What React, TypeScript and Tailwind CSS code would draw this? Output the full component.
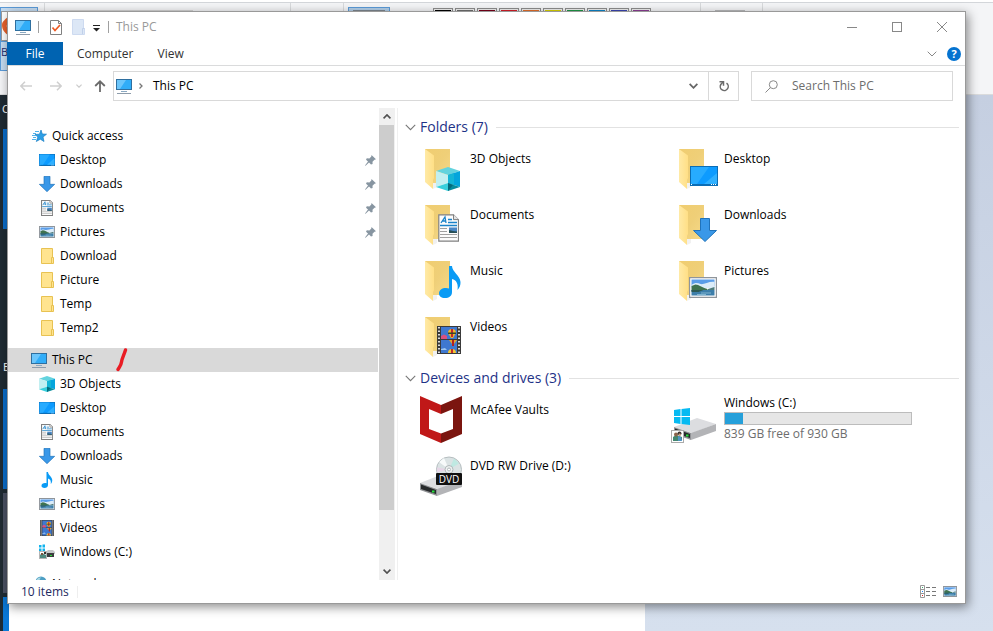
import { useState } from 'react'
import type { ReactNode, SVGProps } from 'react'

type Glyph = (props: SVGProps<SVGSVGElement>) => ReactNode

// ---- small glyphs, shared by the tree and the folder tiles ---------

function DesktopGlyph(props: SVGProps<SVGSVGElement>) {
  return (
    <svg viewBox="0 0 28 20" preserveAspectRatio="none" aria-hidden="true" {...props}>
      <rect width="28" height="20" fill="#0b6db5" />
      <rect x="1" y="1" width="26" height="17" fill="#0d9bff" />
      <path d="M1 1h18L7 18H1z" fill="#27abff" />
      <path d="M27 7v11H14z" fill="#2fb0ff" />
      <path d="M1 18.500h2M21 18.500h6" stroke="#fff" strokeDasharray="1 1" />
    </svg>
  )
}

function DownloadGlyph(props: SVGProps<SVGSVGElement>) {
  return (
    <svg viewBox="0 0 24 24" aria-hidden="true" {...props}>
      <path d="M7.500.5h9v12h7L12 23.500.5 12.500h7z" fill="#3a98e8" stroke="#2073ba" />
    </svg>
  )
}

function DocumentGlyph(props: SVGProps<SVGSVGElement>) {
  return (
    <svg viewBox="0 0 21 28" preserveAspectRatio="none" aria-hidden="true" {...props}>
      <path
        d="M.8.800h14.700l5 5v21.400H.8z"
        fill="#fcfcfc"
        stroke="#808080"
        strokeWidth="1.200"
        vectorEffect="non-scaling-stroke"
      />
      <path d="M15.500.6v5h5" fill="#e4e4e4" stroke="#808080" />
      <path d="M3 9l4-6 1 6M4.500 7h3.500M10 5.500h4M10 8.500h9M2 11.500h17" fill="none" stroke="#1b83c9" strokeWidth="1.300" />
      <path d="M2 14.500h7M2 17.500h7M2 20.500h17M2 23.500h17" stroke="#a0a0a0" />
      <rect x="11" y="13.500" width="8" height="5.500" fill="#4a86c4" />
      <path d="M11 19v-3l4 1 4 .5V19z" fill="#274f56" />
    </svg>
  )
}

function PictureGlyph(props: SVGProps<SVGSVGElement>) {
  return (
    <svg viewBox="0 0 28 21" preserveAspectRatio="none" aria-hidden="true" {...props}>
      <rect width="28" height="21" fill="#fff" />
      <rect x="2.500" y="2.500" width="23" height="7" fill="#5a9de8" />
      <path d="M2.500 8c4-3 6-2 9-1s9-3 14-2v6h-23z" fill="#dcecf8" />
      <path d="M2.500 9l4-1.500c3 0 8 3.500 12 4.500v2h-16z" fill="#3f7350" />
      <path d="M19 12l6.500-2v3H19z" fill="#4f7c7c" />
      <rect x="2.500" y="13" width="23" height="5.500" fill="#3c7eaa" />
      <path d="M2.500 13h12l-5 2h-7z" fill="#2c5952" />
      <path d="M12 16h10M8 17.500h9" stroke="#8fc0d8" strokeWidth=".8" />
      <rect
        x=".6"
        y=".6"
        width="26.800"
        height="19.800"
        fill="none"
        stroke="#8f959b"
        strokeWidth="1.200"
        vectorEffect="non-scaling-stroke"
      />
    </svg>
  )
}

function CubeGlyph(props: SVGProps<SVGSVGElement>) {
  return (
    <svg viewBox="0 0 24 24" aria-hidden="true" {...props}>
      <path d="M0 4l12-4 12 4-12 4z" fill="#63d3de" />
      <path d="M0 4l12 4v8L0 20z" fill="#c2eff1" />
      <path d="M24 4L12 8v8l12 4z" fill="#04a5dc" />
      <path d="M12 8l6-2v12l-6-2z" fill="#14b5d6" />
      <path d="M0 20l12-4v8z" fill="#38cfdc" />
      <path d="M24 20l-12-4v8z" fill="#078c9d" />
      <path d="M12 16l5 2-5 6z" fill="#046a7c" />
    </svg>
  )
}

function MusicGlyph(props: SVGProps<SVGSVGElement>) {
  return (
    <svg viewBox="0 0 22 32" aria-hidden="true" {...props}>
      <path
        d="M10 0h3c0 6 8 9 8.500 16 .2 3-1 6-3 8 1-6-1-10-5.500-11v13c0 4-3 6-7 6s-6-2-6-4.500C0 24 3 22 7 22c1.200 0 2.200.2 3 .6z"
        fill="#0a9bf5"
      />
    </svg>
  )
}

function VideoGlyph(props: SVGProps<SVGSVGElement>) {
  return (
    <svg viewBox="0 0 24 28" preserveAspectRatio="none" aria-hidden="true" {...props}>
      <rect width="24" height="28" fill="#3a3a3a" />
      <path d="M2 1v27M22 1v27" stroke="#dcdcdc" strokeWidth="2" strokeDasharray="1.500 2" />
      <rect x="4" y="1" width="16" height="12" fill="#3f78cf" />
      <rect x="4" y="14" width="16" height="13" fill="#3f78cf" />
      <path d="M4 10l3-1.500 3 1.500v3H4z" fill="#d9507f" />
      <path d="M11 7a4 4 0 018 0l-3 5h-2z" fill="#f0b429" />
      <path d="M14 3h2v8h-2z" fill="#c62a2a" />
      <path d="M11 6.500h8v1.500h-8z" fill="#35472c" />
      <path d="M12 14h8l-3 4h-2z" fill="#e0a32f" />
      <path d="M15 14h2v6h-2z" fill="#b32020" />
      <path d="M4 23l4-1 2 2H4z" fill="#9dc7f2" />
      <path d="M11 27a4 4 0 018 0z" fill="#f2c531" />
      <path d="M14 23h2v4h-2z" fill="#c62a2a" />
    </svg>
  )
}

function FolderGlyph(props: SVGProps<SVGSVGElement>) {
  return (
    <svg viewBox="0 0 16 16" aria-hidden="true" {...props}>
      <path d="M2.500.5h11v9h1v6h-12z" fill="#ffe48f" stroke="#e8c252" />
      <path d="M12.500 15v-5.500h1.500" fill="none" stroke="#e8c252" />
    </svg>
  )
}

function PcGlyph(props: SVGProps<SVGSVGElement>) {
  return (
    <svg viewBox="0 0 16 16" aria-hidden="true" {...props}>
      <rect x=".5" y="1.500" width="15" height="10" fill="#31adf8" stroke="#2f6f9f" />
      <path d="M1 2h9L4 11H1z" fill="#6cc6fb" />
      <path d="M5 13.500h6" stroke="#8aa9c2" />
      <path d="M1 15.500h14" stroke="#8d9cab" />
    </svg>
  )
}

function StarGlyph(props: SVGProps<SVGSVGElement>) {
  return (
    <svg viewBox="0 0 16 16" aria-hidden="true" {...props}>
      <path d="M10 2l1.300 4 4.200.2-3.500 2.800 1 4.500-3.700-2.300-4 2.300 1.600-4.500L4 6.500l4.500-.3z" fill="#2c9fe6" stroke="#1b7fc4" strokeWidth=".7" />
      <path d="M4 3.500h4M2 5.500h3M1 7.500h4M2 9.500h3M1 11.500h4" stroke="#51b2ea" />
    </svg>
  )
}

function DriveGlyph(props: SVGProps<SVGSVGElement>) {
  return (
    <svg viewBox="0 0 16 16" aria-hidden="true" {...props}>
      <path d="M0 1h2.500v2.500H0zM3.500.5H6v3H3.500zM0 4.500h2.500V7H0zM3.500 4.500H6v3H3.500z" fill="#12b4ee" />
      <path d="M7 8l2-2h5l2 2v2H7z" fill="#c4c6c8" />
      <rect x="8" y="9" width="7" height="4" fill="#3b3d3f" />
      <rect x="11" y="11" width="2" height="1" fill="#2dde3b" />
      <rect x=".5" y="7.500" width="7" height="7" fill="#fff" stroke="#b4b4b4" />
      <path d="M1 14v-3l2-2 4 2v3z" fill="#4f8a80" />
      <path d="M2 9h2v2H2z" fill="#7a553f" />
      <path d="M5 8h2v2H5z" fill="#3c332f" />
    </svg>
  )
}

function NetworkGlyph(props: SVGProps<SVGSVGElement>) {
  return (
    <svg viewBox="0 0 16 16" aria-hidden="true" {...props}>
      <circle cx="10" cy="6" r="5.500" fill="#4d9fc4" />
      <path d="M6 3c2-2 3-1 4-2l-2 4-3 2z" fill="#a9d7e2" />
      <rect x="1" y="7" width="9" height="6" fill="#3aaef5" stroke="#2f6f9f" />
    </svg>
  )
}

function PinGlyph(props: SVGProps<SVGSVGElement>) {
  return (
    <svg viewBox="0 0 11 11" aria-hidden="true" {...props}>
      <path d="M6.500 0L11 4.300l-1.500.4-2 2 .1 2.300L6 9.500 4 7.400.6 10.800 0 10.500 3 6.500 1 4.700l.8-1.500 2.600.3 1.900-2z" fill="#8795a1" />
    </svg>
  )
}

function Chevron({ className }: { className?: string }) {
  return (
    <svg viewBox="0 0 10 6" className={className} fill="none" stroke="currentColor" aria-hidden="true">
      <path d="M.7.700L5 5 9.300.700" />
    </svg>
  )
}

// ---- 48px tile icons ------------------------------------------------

function FolderTile({ children }: { children: ReactNode }) {
  return (
    <svg viewBox="0 0 48 48" className="size-12 shrink-0" aria-hidden="true">
      <defs>
        <linearGradient id="folder-back" x1="0" x2="1" y1="0" y2="1">
          <stop offset="0" stopColor="#f0cd70" />
          <stop offset="0.500" stopColor="#efcf78" />
          <stop offset="1" stopColor="#f6da8a" />
        </linearGradient>
        <linearGradient id="folder-flap" x1="0" x2="1">
          <stop offset="0" stopColor="#ffeaa6" />
          <stop offset="1" stopColor="#ffdf86" />
        </linearGradient>
      </defs>
      <path d="M16 45l4-2v-4h-4z" fill="#f1f1f1" />
      <path d="M8 5h25v34H15L8 36z" fill="url(#folder-back)" />
      <path d="M8 5l9 6.500V34l-1 2v9l-8-7z" fill="url(#folder-flap)" />
      {children}
    </svg>
  )
}

function McAfeeTile() {
  return (
    <svg viewBox="0 0 48 48" className="size-12 shrink-0" aria-hidden="true">
      <path d="M3 1l21 9v9l-12-5v20l12 4.500V48L3 39z" fill="#c01818" />
      <path d="M45 1l-21 9v9l12-5v20l-12 4.500V48l21-9z" fill="#7b150f" />
    </svg>
  )
}

function DriveBody() {
  return (
    <>
      <path d="M3 32l23-9 19 6-24 9z" fill="#dcdde0" />
      <path d="M20 38l25-9v7l-25 9z" fill="#b3b4b7" />
      <path d="M3 32l17 6v7L3 39z" fill="#909295" />
      <path d="M4 33.500l15 5.500v4L4 38z" fill="#26292b" />
      <rect x="15" y="39.500" width="2.500" height="2" fill="#27e03c" />
    </>
  )
}

function DvdTile() {
  return (
    <svg viewBox="0 0 48 48" className="size-12 shrink-0" aria-hidden="true">
      <DriveBody />
      <circle cx="32" cy="18.500" r="12.500" fill="#dbe3e4" stroke="#b5bdbf" />
      <path d="M32 18.500L22 11l5-4z" fill="#f7fafa" />
      <path d="M32 18.500l5-11 5 5z" fill="#bfe9e2" />
      <path d="M32 18.500l-12-2v5z" fill="#e6d5e6" />
      <circle cx="32" cy="18.500" r="4" fill="#eef1f1" stroke="#b0b8ba" />
      <circle cx="32" cy="18.500" r="1.500" fill="#fff" stroke="#b0b8ba" />
      <rect x="19" y="22" width="26" height="12" rx="1" fill="#111" />
      <text x="32" y="31.500" fill="#fff" fontSize="10" textAnchor="middle">
        DVD
      </text>
    </svg>
  )
}

function WindowsDriveTile() {
  return (
    <svg viewBox="0 0 48 48" className="size-12 shrink-0" aria-hidden="true">
      <DriveBody />
      <path d="M3 15l6.500-1v7H3zM10.500 14l8.500-1v8h-8.500zM3 22h6.500v7L3 28zM10.500 22H19v8l-8.500-1z" fill="#06baf2" />
      <rect x=".5" y="35.500" width="12" height="12" fill="#fff" stroke="#ababab" />
      <path d="M2 46v-4l3-2 3 1 3 1v3l-3 1z" fill="#42866f" />
      <path d="M7 41l3 1 1 4H7z" fill="#4e93c5" />
      <circle cx="5" cy="39.500" r="2" fill="#8b634a" />
      <circle cx="8.500" cy="38.500" r="2" fill="#3c332f" />
      <circle cx="8.700" cy="39.700" r="1.200" fill="#c99b7d" />
    </svg>
  )
}

// ---- data -------------------------------------------------------------

interface TreeItem {
  name: string
  icon: Glyph
  pinned?: boolean
}

interface TreeGroup extends TreeItem {
  items: TreeItem[]
}

const tree: TreeGroup[] = [
  {
    name: 'Quick access',
    icon: StarGlyph,
    items: [
      { name: 'Desktop', icon: DesktopGlyph, pinned: true },
      { name: 'Downloads', icon: DownloadGlyph, pinned: true },
      { name: 'Documents', icon: DocumentGlyph, pinned: true },
      { name: 'Pictures', icon: PictureGlyph, pinned: true },
      { name: 'Download', icon: FolderGlyph },
      { name: 'Picture', icon: FolderGlyph },
      { name: 'Temp', icon: FolderGlyph },
      { name: 'Temp2', icon: FolderGlyph },
    ],
  },
  {
    name: 'This PC',
    icon: PcGlyph,
    items: [
      { name: '3D Objects', icon: CubeGlyph },
      { name: 'Desktop', icon: DesktopGlyph },
      { name: 'Documents', icon: DocumentGlyph },
      { name: 'Downloads', icon: DownloadGlyph },
      { name: 'Music', icon: MusicGlyph },
      { name: 'Pictures', icon: PictureGlyph },
      { name: 'Videos', icon: VideoGlyph },
      { name: 'Windows (C:)', icon: DriveGlyph },
    ],
  },
  { name: 'Network', icon: NetworkGlyph, items: [] },
]

const glyphSize = new Map<Glyph, string>([
  [DesktopGlyph, 'h-3 w-4'],
  [PictureGlyph, 'h-3 w-4'],
  [DocumentGlyph, 'h-4 w-3'],
  [VideoGlyph, 'h-4 w-[14px]'],
])

const folders: { name: string; icon: ReactNode }[] = [
  { name: '3D Objects', icon: <CubeGlyph x="19" y="23" width="24" height="24" /> },
  { name: 'Desktop', icon: <DesktopGlyph x="19" y="22" width="28" height="20" /> },
  { name: 'Documents', icon: <DocumentGlyph x="21" y="14" width="21" height="28" /> },
  { name: 'Downloads', icon: <DownloadGlyph x="22" y="18" width="24" height="24" /> },
  { name: 'Music', icon: <MusicGlyph x="22" y="10" width="22" height="32" /> },
  { name: 'Pictures', icon: <PictureGlyph x="18" y="21" width="28" height="21" /> },
  { name: 'Videos', icon: <VideoGlyph x="20" y="14" width="24" height="28" /> },
]

const swatches = [
  'bg-black',
  'bg-[#6f6f6f]',
  'bg-[#7a0019]',
  'bg-[#d81e28]',
  'bg-[#e8702a]',
  'bg-[#ddd600]',
  'bg-[#1f9a48]',
  'bg-[#0c86cc]',
  'bg-[#3b45b5]',
  'bg-[#8d3f95]',
]

const drive = { freeGB: 839, totalGB: 930 }

// ---- what lies behind the window --------------------------------------

function Backdrop() {
  return (
    <div className="absolute inset-0 flex flex-col overflow-hidden" aria-hidden="true">
      <div className="flex h-[95px] shrink-0 items-start border-t-2 border-b border-t-white border-b-[#dadbdc] bg-[#f4f5f7]">
        <div className="flex h-[92px] flex-1 items-start border-t border-[#d3d6da]">
          <div className="mt-1 h-16 w-[38px] border border-[#5b9bd8] bg-[#c5dbf0]">
            <div className="mt-[3px] h-[30px] w-7 border border-[#9a9a9a] bg-white">
              <svg viewBox="0 0 8 20" className="mt-1 h-5 w-2">
                <path d="M7 0C4 3 0 5 0 9c0 5 3 8 7 11V14c-3-3-3-5 0-8z" fill="#e8622c" />
              </svg>
            </div>
            <div className="border-t border-[#5b9bd8] pt-1 text-[11px] leading-3 text-[#1e2a6b]">Bru</div>
          </div>
          <div className="ml-1.5 h-20 border-l border-[#d8dadc]" />
          <div className="ml-1.5 mt-[7px] h-4 w-[142px] bg-[#d5d5d5]" />
          <div className="ml-[97px] h-20 border-l border-[#d8dadc]" />
          <div className="mt-2 ml-[9px] h-4 w-8 bg-[#3c4654]" />
          <div className="ml-[11px] h-20 border-l border-[#d8dadc]" />
          <div className="mt-1 ml-1 h-16 w-[42px] border border-[#5b9bd8] bg-[#b3cfe9] px-1 pt-0.5">
            <div className="h-3 bg-[#7e8790]" />
          </div>
          <div className="mt-[5px] ml-[43px] flex gap-0.5">
            {swatches.map((color) => (
              <div key={color} className="size-5 border border-[#8e8e8e] bg-[#f0f0f0] p-px">
                <div className={`size-full ${color}`} />
              </div>
            ))}
          </div>
          <div className="ml-[49px] h-20 border-l border-[#d8dadc]" />
          <div className="mt-[7px] ml-[14px] h-4 w-[30px] bg-[#b9bbbd]" />
          <div className="ml-[17px] h-20 border-l border-[#d8dadc]" />
        </div>
      </div>
      <div className="flex min-h-0 flex-1 bg-linear-to-b from-[#c5cfe1] to-[#d6e0ee]">
        <div className="flex w-[9px] flex-col bg-[#1f2b33] pl-[3px]">
          <div className="-ml-[3px] mt-2 h-[26px] w-[9px] pl-0.5 text-[11px] leading-3 text-white">C</div>
          <div className="h-[100px] bg-[#0a6cc8]" />
          <div className="-ml-[3px] mt-[132px] h-7 w-[9px] pl-[3px] text-[11px] leading-3 text-white">E</div>
          <div className="h-[100px] bg-[#0a6cc8]" />
          <div className="mt-1 h-[100px] bg-[#4a5163]" />
          <div className="mt-1 flex-1 bg-[#0b78d6]" />
        </div>
        <div className="w-[64%] bg-white" />
      </div>
    </div>
  )
}

// ---- window parts -------------------------------------------------------

function TitleBar() {
  return (
    <header className="flex h-[30px] shrink-0 items-center pr-px">
      <PcGlyph className="ml-[7px] size-4" />
      <span className="ml-[7px] h-3 w-px bg-[#a0a0a0]" />
      <button type="button" aria-label="Properties" className="ml-[11px]">
        <svg viewBox="0 0 12 15" className="h-[15px] w-3">
          <path d="M.5.500h8l3 3v11H.5z" fill="#fff" stroke="#808080" />
          <path d="M8.500.5v3h3" fill="none" stroke="#808080" />
          <path d="M2.500 7.500L5 10.500l5-5.500" fill="none" stroke="#ee5a22" strokeWidth="1.700" />
        </svg>
      </button>
      <button type="button" aria-label="New folder" className="ml-2.5">
        <svg viewBox="0 0 13 16" className="h-4 w-[13px]">
          <path d="M.5.500h11v9h1v6H.5z" fill="#dce7f6" stroke="#cddaf0" />
          <path d="M10.500 15V9.500h2" fill="none" stroke="#c0d0ea" />
        </svg>
      </button>
      <button type="button" aria-label="Customize Quick Access Toolbar" className="ml-2">
        <svg viewBox="0 0 7 7" className="mt-0.5 size-[7px]">
          <path d="M0 .5h7" stroke="#222" />
          <path d="M0 3h7L3.500 6.500z" fill="#222" />
        </svg>
      </button>
      <span className="ml-2 h-3 w-px bg-[#a0a0a0]" />
      <h1 className="ml-[7px] flex-1 text-xs text-[#999]">This PC</h1>
      <button type="button" aria-label="Minimize" className="flex h-full w-[45px] items-center justify-center">
        <span className="h-px w-2.5 bg-[#888]" />
      </button>
      <button type="button" aria-label="Maximize" className="flex h-full w-[45px] items-center justify-center">
        <span className="size-2.5 border border-[#888]" />
      </button>
      <button type="button" aria-label="Close" className="flex h-full w-[45px] items-center justify-center">
        <svg viewBox="0 0 10 10" className="size-2.5" stroke="#888">
          <path d="M0 0l10 10M10 0L0 10" />
        </svg>
      </button>
    </header>
  )
}

function Ribbon() {
  return (
    <nav className="flex h-6 shrink-0 items-center border-b border-[#dadbdc] text-xs text-[#333]">
      <button type="button" className="-ml-px h-full w-14 bg-[#0063b1] text-white">
        File
      </button>
      <button type="button" className="h-full px-3.5">
        Computer
      </button>
      <button type="button" className="h-full pr-3.5 pl-2.5">
        View
      </button>
      <button type="button" aria-label="Expand the Ribbon" className="ml-auto mr-2.5 text-[#888]">
        <Chevron className="h-[6px] w-2.5" />
      </button>
      <button
        type="button"
        aria-label="Help"
        className="mr-1 size-3.5 rounded-full bg-[#0573d0] text-[11px] leading-[14px] font-bold text-white"
      >
        ?
      </button>
    </nav>
  )
}

function AddressBar() {
  const [query, setQuery] = useState('')

  return (
    <div className="flex shrink-0 items-center pt-[5px] pb-[7px] pr-3 pl-3 text-xs">
      <button type="button" aria-label="Back" disabled>
        <svg viewBox="0 0 12 10" className="h-2.5 w-3" fill="none" stroke="#cfcfcf" strokeWidth="1.500">
          <path d="M12 5H1M5 .800L.9 5 5 9.200" />
        </svg>
      </button>
      <button type="button" aria-label="Forward" className="ml-[18px]" disabled>
        <svg viewBox="0 0 12 10" className="h-2.5 w-3" fill="none" stroke="#cfcfcf" strokeWidth="1.500">
          <path d="M0 5h11M7 .800L11.100 5 7 9.200" />
        </svg>
      </button>
      <button type="button" aria-label="Recent locations" className="ml-3.5 text-[#ccc]">
        <Chevron className="h-1 w-[6px] stroke-2" />
      </button>
      <button type="button" aria-label="Up" className="ml-3">
        <svg viewBox="0 0 12 12" className="size-3" fill="none" stroke="#6b6b6b" strokeWidth="1.800">
          <path d="M6 12V1.500M1.200 6L6 1.300 10.800 6" />
        </svg>
      </button>
      <div className="ml-[7px] flex h-[30px] flex-1 items-center border border-[#d9d9d9]">
        <PcGlyph className="ml-0.5 size-4 shrink-0" />
        <svg viewBox="0 0 4 6" className="ml-[7px] h-[6px] w-1" fill="none" stroke="#777" strokeWidth="1.300">
          <path d="M.5.500L3 3 .5 5.500" />
        </svg>
        <button type="button" className="ml-2.5 flex-1 text-left text-black">
          This PC
        </button>
        <button type="button" aria-label="Previous locations" className="px-2.5 text-[#666]">
          <Chevron className="h-[6px] w-[9px] stroke-2" />
        </button>
        <button
          type="button"
          aria-label="Refresh"
          className="flex h-full w-[30px] items-center justify-center border-l border-[#d9d9d9]"
        >
          <svg viewBox="0 0 12 12" className="size-3" fill="none" stroke="#6b6b6b" strokeWidth="1.500">
            <path d="M8.500 3.200A4 4 0 112.800 4.500L5 2" />
            <path d="M1.500 1.700h4v4" />
          </svg>
        </button>
      </div>
      <label className="ml-3 flex h-[30px] w-[202px] items-center border border-[#d9d9d9]">
        <svg viewBox="0 0 13 13" className="ml-[13px] size-[13px] shrink-0" fill="none" stroke="#888">
          <circle cx="8.300" cy="4.700" r="4" />
          <path d="M5.500 7.500L.5 12.500" />
        </svg>
        <input
          type="search"
          aria-label="Search This PC"
          placeholder="Search This PC"
          value={query}
          onChange={(e) => setQuery(e.target.value)}
          className="ml-3.5 min-w-0 flex-1 outline-none placeholder:text-[#6d6d6d]"
        />
      </label>
    </div>
  )
}

interface TreeRowProps {
  item: TreeItem
  child?: boolean
  selected?: boolean
  onSelect?: () => void
}

function TreeRow({ item, child, selected, onSelect }: TreeRowProps) {
  const Icon = item.icon
  return (
    <button
      type="button"
      onClick={onSelect}
      className={`relative flex h-6 w-full items-center text-left ${child ? 'pl-[31px]' : 'pl-[23px]'} ${
        selected ? 'bg-[#d9d9d9]' : ''
      }`}
    >
      <span className="flex w-4 shrink-0 justify-center">
        <Icon className={glyphSize.get(item.icon) ?? 'size-4'} />
      </span>
      <span className="ml-[5px] flex-1">{item.name}</span>
      {item.pinned && <PinGlyph className="mr-0.5 size-[11px]" />}
      {selected && (
        <svg viewBox="0 0 12 24" className="absolute top-0 left-[108px] h-6 w-3" aria-hidden="true">
          <path d="M9.500 2C8 7 6 10 5.500 14S3 19 2 21.500" fill="none" stroke="#e91c24" strokeWidth="3.400" strokeLinecap="round" />
        </svg>
      )}
    </button>
  )
}

function Sidebar() {
  const [selected, setSelected] = useState('This PC')

  return (
    <aside className="flex w-[387px] shrink-0">
      <div className="min-w-0 flex-1 overflow-hidden pt-4 pr-px">
        {tree.map((group) => (
          <div key={group.name} className="mb-2">
            <TreeRow item={group} selected={group.name === selected} onSelect={() => setSelected(group.name)} />
            {group.items.map((item) => (
              <TreeRow key={item.name} item={item} child />
            ))}
          </div>
        ))}
      </div>
      <div className="flex w-4 flex-col bg-[#f0f0f0] text-[#505050]">
        <div className="flex h-[17px] shrink-0 items-center justify-center">
          <Chevron className="h-[5px] w-2 rotate-180 stroke-2" />
        </div>
        <div className="flex-1">
          <div className="mr-px h-[88%] bg-[#cdcdcd]" />
        </div>
        <div className="flex h-[17px] shrink-0 items-center justify-center">
          <Chevron className="h-[5px] w-2 stroke-2" />
        </div>
      </div>
    </aside>
  )
}

function Section({ title, children }: { title: string; children: ReactNode }) {
  return (
    <section>
      <div className="flex h-5 items-center pr-1.5 pl-[7px]">
        <Chevron className="h-[7px] w-[11px] text-[#777]" />
        <h2 className="ml-1 text-sm leading-5 text-[#1e3287]">{title}</h2>
        <span className="ml-2 h-px flex-1 bg-[#e2e2e2]" />
      </div>
      <div className="mt-[7px] grid grid-cols-[repeat(auto-fill,254px)] pl-[19px]">{children}</div>
    </section>
  )
}

function Tile({ icon, children }: { icon: ReactNode; children: ReactNode }) {
  return (
    <div className="flex h-14 items-start">
      {icon}
      <div className="ml-[5px] leading-4">{children}</div>
    </div>
  )
}

function Content() {
  const used = (1 - drive.freeGB / drive.totalGB) * 100

  return (
    <main className="ml-0.5 min-w-0 flex-1 overflow-hidden border-l border-[#f0f0f0] pt-[9px]">
      <Section title={`Folders (${folders.length})`}>
        {folders.map((folder) => (
          <Tile key={folder.name} icon={<FolderTile>{folder.icon}</FolderTile>}>
            <p className="pt-[7px]">{folder.name}</p>
          </Tile>
        ))}
      </Section>
      <Section title="Devices and drives (3)">
        <Tile icon={<McAfeeTile />}>
          <p className="pt-[7px]">McAfee Vaults</p>
        </Tile>
        <Tile icon={<WindowsDriveTile />}>
          <p>Windows (C:)</p>
          <div
            role="meter"
            aria-label="Space used"
            aria-valuenow={Math.round(used)}
            className="my-px h-[13px] w-[188px] border border-[#bcbcbc] bg-[#e6e6e6]"
          >
            <div className="h-full bg-[#26a0da]" style={{ width: `${used}%` }} />
          </div>
          <p className="text-[#6d6d6d]">
            {drive.freeGB} GB free of {drive.totalGB} GB
          </p>
        </Tile>
        <Tile icon={<DvdTile />}>
          <p className="pt-[7px]">DVD RW Drive (D:)</p>
        </Tile>
      </Section>
    </main>
  )
}

function StatusBar() {
  return (
    <footer className="flex h-[23px] shrink-0 items-center pr-2 pl-[13px] text-[#1e2a5f]">
      <span>10 items</span>
      <span className="ml-2 h-3 w-px bg-[#eee]" />
      <button type="button" aria-label="Details view" className="ml-auto">
        <svg viewBox="0 0 17 13" className="h-[13px] w-[17px]" fill="none">
          <path d="M.5.500h4v12h-4zM.5 4.500h4M.5 8.500h4" stroke="#999" />
          <path d="M2 2.500h1" stroke="#3a6" />
          <path d="M2 6.500h1" stroke="#28f" />
          <path d="M2 10.500h1" stroke="#d22" />
          <path d="M6 2.500h4M12 2.500h4M6 6.500h4M12 6.500h4M6 10.500h4M12 10.500h4" stroke="#777" />
        </svg>
      </button>
      <button type="button" aria-label="Large thumbnails" className="ml-1.5">
        <PictureGlyph className="h-[11px] w-3.5" />
      </button>
    </footer>
  )
}

export default function App() {
  return (
    <div className="relative flex h-screen min-h-[400px] flex-col bg-white pt-[11px] pr-[27px] pb-[27px] pl-[7px] font-['Open_Sans','Noto_Sans',sans-serif] text-xs text-black">
      <Backdrop />
      <div className="relative flex min-h-0 flex-1 flex-col border border-[#999] bg-white shadow-[2px_3px_10px_rgba(0,0,0,0.45)]">
        <TitleBar />
        <Ribbon />
        <AddressBar />
        <div className="flex min-h-0 flex-1">
          <Sidebar />
          <Content />
        </div>
        <StatusBar />
      </div>
    </div>
  )
}
